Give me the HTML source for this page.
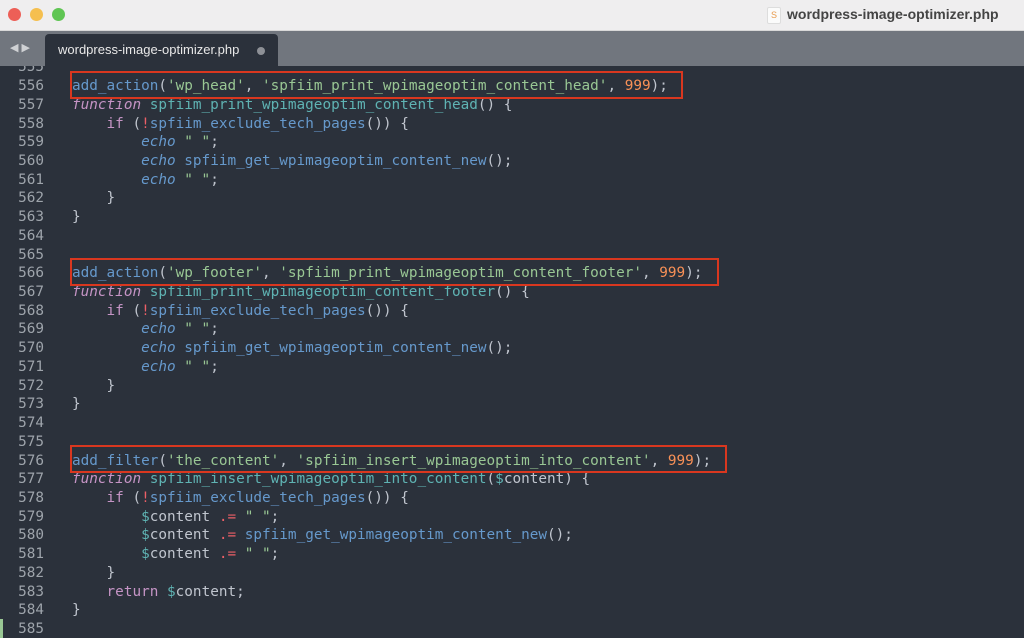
<!DOCTYPE html><html><head><style>
body{margin:0;width:1024px;height:638px;overflow:hidden;background:#2b313b;font-family:"Liberation Sans",sans-serif}
.title{position:absolute;left:0;top:0;width:1024px;height:30px;background:#efeeef;border-bottom:1px solid #d8d8d8}
.dot{position:absolute;top:8px;width:13px;height:13px;border-radius:50%}
.tabbar{position:absolute;top:31px;left:0;width:1024px;height:35px;background:#71767e}
.tab{position:absolute;left:45px;top:3px;width:233px;height:32px;background:#2b313b;border-radius:4px 4px 0 0;color:#e8e8e8;font-size:13px;line-height:32px;padding-left:13px;box-sizing:border-box}
.code{position:absolute;top:66px;left:0;width:1024px;height:572px;overflow:hidden}
.ln{position:absolute;left:0;width:44px;text-align:right;color:#9ea4ab}
.l{position:absolute;left:72px;white-space:pre;color:#c0c5ce}
.code div{font-family:"DejaVu Sans Mono","Liberation Mono",monospace;font-size:14.35px;height:18.72px;line-height:18.72px}
.f{color:#6699cc}.s{color:#99c794}.n{color:#f99157}.k{color:#c594c5;font-style:italic}.c{color:#5fb3b3}.r{color:#ec5f67}.e{color:#6699cc;font-style:italic}.p{color:#a7adba}.kw{color:#c594c5}
.box{position:absolute;left:70px;height:28px;border:2px solid #d9371f;box-sizing:border-box}
</style></head><body>
<div class="title">
<div class="dot" style="left:8px;background:#ed5f57"></div>
<div class="dot" style="left:30px;background:#f5bf4f"></div>
<div class="dot" style="left:52px;background:#5fc553"></div>
<div style="position:absolute;left:767px;top:7px;width:12px;height:15px;background:#fbfbfb;border:1px solid #ddd;border-radius:2px;color:#e89b4e;font-size:9px;text-align:center;line-height:15px">S</div>
<div style="position:absolute;left:787px;top:6px;font-size:14px;font-weight:bold;color:#444">wordpress-image-optimizer.php</div>
</div>
<div class="tabbar">
<div style="position:absolute;left:10px;top:10px;color:#cfd1d4;font-size:11px">◀ ▶</div>
<div class="tab">wordpress-image-optimizer.php<span style="position:absolute;left:212px;top:13px;width:8px;height:8px;border-radius:50%;background:#8d9096"></span></div>
</div>
<div class="code" id="c"></div>
<div class="box" style="top:71px;width:613px"></div>
<div class="box" style="top:258px;width:649px"></div>
<div class="box" style="top:445px;width:657px"></div>
<div style="position:absolute;left:0;top:619px;width:3px;height:19px;background:#99c794"></div>
<script>
var L=[
'',
'<span class="f">add_action</span>(<span class="s">\'wp_head\'</span>, <span class="s">\'spfiim_print_wpimageoptim_content_head\'</span>, <span class="n">999</span>);',
'<span class="k">function</span> <span class="c">spfiim_print_wpimageoptim_content_head</span>() {',
'    <span class="kw">if</span> (<span class="r">!</span><span class="f">spfiim_exclude_tech_pages</span>()) {',
'        <span class="e">echo</span> <span class="s">" "</span>;',
'        <span class="e">echo</span> <span class="f">spfiim_get_wpimageoptim_content_new</span>();',
'        <span class="e">echo</span> <span class="s">" "</span>;',
'    }','}','','',
'<span class="f">add_action</span>(<span class="s">\'wp_footer\'</span>, <span class="s">\'spfiim_print_wpimageoptim_content_footer\'</span>, <span class="n">999</span>);',
'<span class="k">function</span> <span class="c">spfiim_print_wpimageoptim_content_footer</span>() {',
'    <span class="kw">if</span> (<span class="r">!</span><span class="f">spfiim_exclude_tech_pages</span>()) {',
'        <span class="e">echo</span> <span class="s">" "</span>;',
'        <span class="e">echo</span> <span class="f">spfiim_get_wpimageoptim_content_new</span>();',
'        <span class="e">echo</span> <span class="s">" "</span>;',
'    }','}','','',
'<span class="f">add_filter</span>(<span class="s">\'the_content\'</span>, <span class="s">\'spfiim_insert_wpimageoptim_into_content\'</span>, <span class="n">999</span>);',
'<span class="k">function</span> <span class="c">spfiim_insert_wpimageoptim_into_content</span>(<span class="c">$</span>content) {',
'    <span class="kw">if</span> (<span class="r">!</span><span class="f">spfiim_exclude_tech_pages</span>()) {',
'        <span class="c">$</span>content <span class="r">.=</span> <span class="s">" "</span>;',
'        <span class="c">$</span>content <span class="r">.=</span> <span class="f">spfiim_get_wpimageoptim_content_new</span>();',
'        <span class="c">$</span>content <span class="r">.=</span> <span class="s">" "</span>;',
'    }',
'    <span class="kw">return</span> <span class="c">$</span>content;',
'}',''];
var h='';for(var i=0;i<L.length;i++){var t=-7.6+i*18.72;h+='<div class="ln" style="top:'+t+'px">'+(555+i)+'</div><div class="l" style="top:'+t+'px">'+L[i]+'</div>';}
document.getElementById('c').innerHTML=h;
</script>
</body></html>
